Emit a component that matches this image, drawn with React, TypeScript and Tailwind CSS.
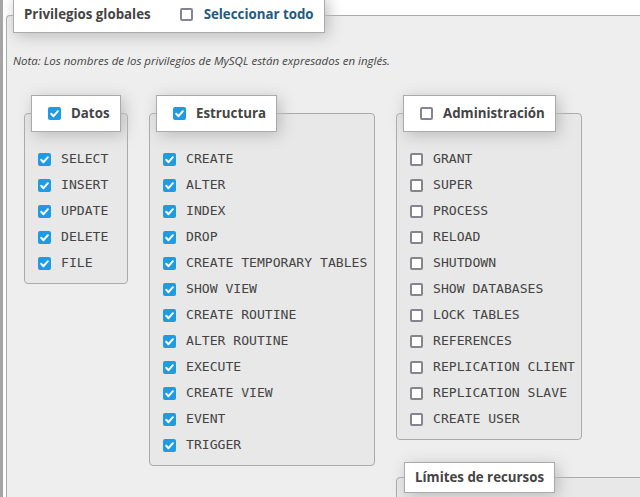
import React from "react";

const datos = ["SELECT", "INSERT", "UPDATE", "DELETE", "FILE"];
const estructura = [
  "CREATE",
  "ALTER",
  "INDEX",
  "DROP",
  "CREATE TEMPORARY TABLES",
  "SHOW VIEW",
  "CREATE ROUTINE",
  "ALTER ROUTINE",
  "EXECUTE",
  "CREATE VIEW",
  "EVENT",
  "TRIGGER",
];
const administracion = [
  "GRANT",
  "SUPER",
  "PROCESS",
  "RELOAD",
  "SHUTDOWN",
  "SHOW DATABASES",
  "LOCK TABLES",
  "REFERENCES",
  "REPLICATION CLIENT",
  "REPLICATION SLAVE",
  "CREATE USER",
];

const Box = ({ checked }: { checked: boolean }) =>
  checked ? (
    <span className="flex h-[13px] w-[13px] shrink-0 items-center justify-center rounded-[2px] bg-[#1e9be2]">
      <svg viewBox="0 0 13 13" className="h-[13px] w-[13px]">
        <path d="M3.2 6.8l2.3 2.4 4.4-5" fill="none" stroke="#fff" strokeWidth="2" strokeLinecap="round" strokeLinejoin="round" />
      </svg>
    </span>
  ) : (
    <span className="h-[13px] w-[13px] shrink-0 rounded-[2px] border-2 border-[#86858f] bg-white" />
  );

const Legend = ({ label, checked }: { label: string; checked?: boolean }) => (
  <div className="relative z-10 ml-[7px] flex h-[37px] w-fit items-center gap-[10px] border border-[#aaa] bg-white pl-[16px] pr-[10px] shadow-[3px_3px_15px_#bbb]">
    <Box checked={!!checked} />
    <span className="text-[13.3px] font-bold text-[#444]">{label}</span>
  </div>
);

const Group = ({ label, items, checked, width }: { label: string; items: string[]; checked: boolean; width: string }) => (
  <div className="flex flex-col">
    <Legend label={label} checked={checked} />
    <div className={`-mt-[19px] rounded-[4px] border border-[#aaa] bg-[#e8e8e8] pb-[7px] pl-[13px] pt-[32px] ${width}`}>
      {items.map((it) => (
        <div key={it} className="flex h-[26px] items-center gap-[10px]">
          <Box checked={checked} />
          <span className="whitespace-pre font-['DejaVu_Sans_Mono',monospace] text-[13.1px] text-[#444]">{it}</span>
        </div>
      ))}
    </div>
  </div>
);

export default function App() {
  return (
    <div className="h-[497px] w-[640px] overflow-hidden border-l-[3px] border-[#a5a5a5] bg-white pl-[3px] font-['Open_Sans',sans-serif] text-[#444]">
      <div className="-mt-[4px] flex flex-col">
        <div className="relative z-10 ml-[7px] flex h-[37px] w-fit items-center border border-[#aaa] bg-white pl-[10px] pr-[10px] shadow-[3px_3px_15px_#bbb]">
          <span className="text-[13.3px] font-bold text-[#444]">Privilegios globales</span>
          <span className="ml-[29px] flex items-center gap-[11px]">
            <Box checked={false} />
            <span className="text-[13.3px] font-bold text-[#235a81]">Seleccionar todo</span>
          </span>
        </div>
        <div className="-mt-[18px] h-[600px] rounded-tl-[4px] border-l border-t border-[#aaa] bg-[#eee] pl-[6px] pt-[37px]">
          <p className="text-[11.5px] italic leading-[15px] text-[#444]">
            Nota: Los nombres de los privilegios de MySQL están expresados en inglés.
          </p>
          <div className="ml-[11px] mt-[27px] flex items-start gap-[21px]">
            <Group label="Datos" items={datos} checked width="w-[104px]" />
            <Group label="Estructura" items={estructura} checked width="w-[226px]" />
            <div className="flex flex-col">
              <Group label="Administración" items={administracion} checked={false} width="w-[186px]" />
              <div className="mt-[22px] flex flex-col">
                <div className="relative z-10 ml-[8px] flex h-[31px] w-fit items-center border border-[#aaa] bg-white px-[10px] shadow-[3px_3px_15px_#bbb]">
                  <span className="text-[13.3px] font-bold text-[#444]">Límites de recursos</span>
                </div>
                <div className="-mt-[16px] h-[100px] w-[300px] rounded-[4px] border border-[#aaa] bg-[#e8e8e8]" />
              </div>
            </div>
          </div>
        </div>
      </div>
    </div>
  );
}
